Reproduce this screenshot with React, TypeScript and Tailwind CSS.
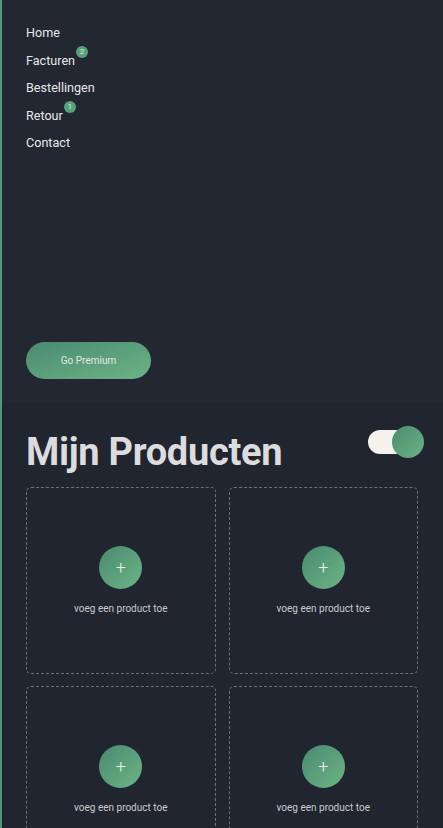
import React, { useState } from "react";

const navItems = [
  { label: "Home" },
  { label: "Facturen", badge: 2 },
  { label: "Bestellingen" },
  { label: "Retour", badge: 1 },
  { label: "Contact" },
];

const ProductCard = () => (
  <div className="flex h-[187px] flex-col items-center justify-center rounded-[5px] border border-dashed border-[#6b6f78]">
    <button className="flex h-[43px] w-[43px] items-center justify-center rounded-full bg-gradient-to-br from-[#4a8a70] to-[#6cb485] text-[18px] font-light text-[#e8efe9]">
      +
    </button>
    <p className="mt-[12px] text-[10px] text-[#c9cbd0]">voeg een product toe</p>
  </div>
);

export default function App() {
  const [on, setOn] = useState(true);

  return (
    <div className="min-h-screen border-l-2 border-[#4d9a78] bg-[#20252f] font-['Roboto',sans-serif]">
      <aside className="flex h-[403px] flex-col justify-between bg-[#222731] px-[24px] pt-[24px] pb-[24px]">
        <nav className="flex flex-col gap-[10.5px]">
          {navItems.map((item) => (
            <a key={item.label} href="#" className="relative w-fit text-[12.6px] leading-[17px] text-[#e6e7ea]">
              {item.label}
              {item.badge && (
                <span className="absolute -top-[6px] -right-[13px] flex h-[12px] w-[12px] items-center justify-center rounded-full bg-[#55a27a] text-[8px] leading-none text-[#dfe9e2]">
                  {item.badge}
                </span>
              )}
            </a>
          ))}
        </nav>
        <button className="h-[37px] w-[125px] rounded-full bg-gradient-to-br from-[#4a8a70] to-[#6cb485] text-[10px] text-[#e3e8e4]">
          Go Premium
        </button>
      </aside>

      <main className="pt-[22px] pr-[25px] pb-[24px] pl-[24px]">
        <div className="flex items-start justify-between">
          <h1 className="text-[38px] leading-[54px] font-bold tracking-[-0.3px] text-[#dcdcde]">Mijn Producten</h1>
          <button onClick={() => setOn(!on)} className="relative mt-[1px] mr-[-6px] h-[32px] w-[56px]">
            <span className="absolute top-[4px] left-0 h-[24px] w-[40px] rounded-full bg-[#f5f1ec]" />
            <span className="absolute top-0 right-0 h-[32px] w-[32px] rounded-full bg-gradient-to-br from-[#4a8a70] to-[#6cb485]" />
          </button>
        </div>
        <div className="mt-[8px] grid grid-cols-2 gap-x-[13px] gap-y-[12px]">
          <ProductCard />
          <ProductCard />
          <ProductCard />
          <ProductCard />
        </div>
      </main>
    </div>
  );
}
